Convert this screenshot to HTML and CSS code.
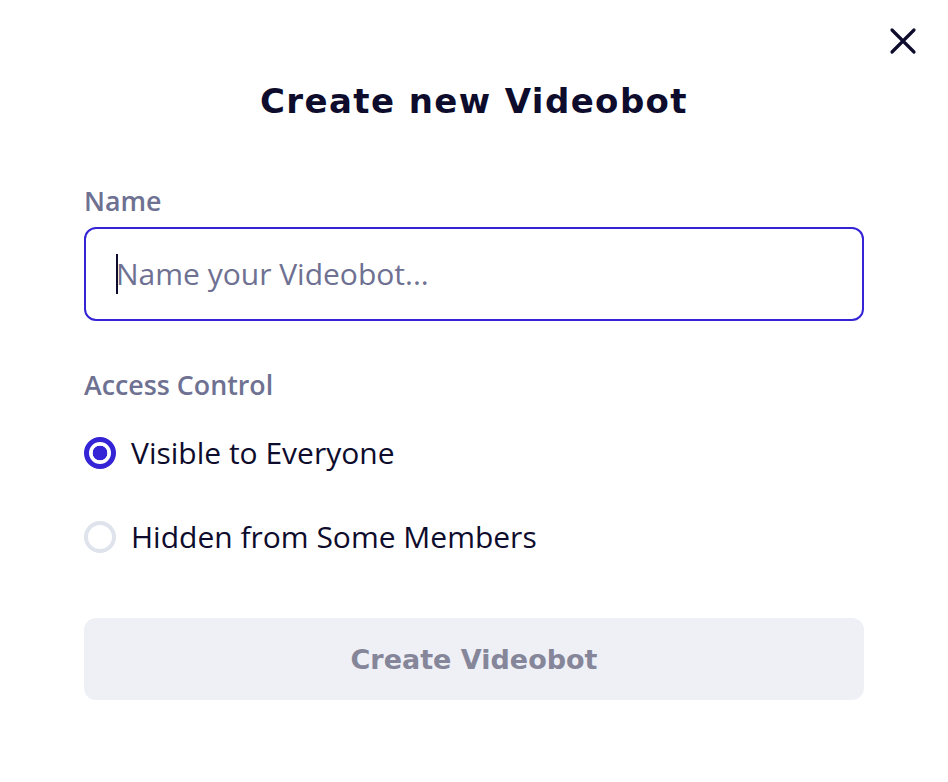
FILE: index.html
```html
<!DOCTYPE html>
<html>
<head>
<meta charset="utf-8">
<link rel="stylesheet" href="styles.css">
</head>
<body>
<div class="modal">
  <button class="close" aria-label="Close">
    <svg width="28" height="28" viewBox="0 0 28 28"><path d="M3 3 L25 25 M25 3 L3 25" stroke="#0e0c2c" stroke-width="3.2" stroke-linecap="round" fill="none"/></svg>
  </button>
  <h1 class="title">Create new Videobot</h1>
  <div class="field">
    <label class="label">Name</label>
    <div class="input"><span class="caret"></span><span class="placeholder">Name your Videobot...</span></div>
  </div>
  <div class="field access">
    <label class="label">Access Control</label>
    <div class="options">
      <div class="option"><span class="radio checked"></span><span class="opt-text">Visible to Everyone</span></div>
      <div class="option"><span class="radio"></span><span class="opt-text">Hidden from Some Members</span></div>
    </div>
  </div>
  <div class="button">Create Videobot</div>
</div>
</body>
</html>
```
FILE: styles.css
```css
html, body {
  margin: 0;
  padding: 0;
  background: #ffffff;
}
.modal {
  position: relative;
  width: 948px;
  height: 782px;
  box-sizing: border-box;
  padding: 78px 84px 0 84px;
  font-family: "Open Sans", "Noto Sans", sans-serif;
}
.close {
  position: absolute;
  top: 27px;
  left: 889px;
  width: 28px;
  height: 28px;
  padding: 0;
  border: none;
  background: none;
}
.close svg { display: block; }
.title {
  margin: 0;
  text-align: center;
  font-family: "DejaVu Sans", sans-serif;
  font-weight: 700;
  font-size: 34px;
  letter-spacing: 1.4px;
  line-height: 46px;
  color: #0e0c2c;
}
.field {
  display: flex;
  flex-direction: column;
  margin-top: 62px;
}
.label {
  font-size: 26.8px;
  font-weight: 600;
  line-height: 30px;
  color: #6e7191;
  margin-bottom: 11px;
}
.input {
  height: 94px;
  box-sizing: border-box;
  border: 2px solid #3424d6;
  border-radius: 12px;
  display: flex;
  align-items: center;
  padding-left: 30px;
}
.caret {
  width: 2px;
  height: 40px;
  background: #0e0c2c;
  margin-right: -2px;
}
.placeholder {
  font-size: 30px;
  line-height: 40px;
  color: #6e7191;
}
.access {
  margin-top: 49px;
}
.access .label {
  margin-bottom: 32px;
}
.options {
  display: flex;
  flex-direction: column;
  gap: 42px;
}
.option {
  display: flex;
  align-items: center;
  gap: 15px;
  height: 42px;
}
.radio {
  width: 32px;
  height: 32px;
  box-sizing: border-box;
  border-radius: 50%;
  border: 4px solid #dfe3eb;
  background: #fff;
  flex: none;
}
.radio.checked {
  border: 5px solid #3424d6;
  background: radial-gradient(circle, #3424d6 0 7px, #fff 7.6px);
}
.opt-text {
  font-size: 30px;
  line-height: 42px;
  color: #0e0c2c;
}
.button {
  margin-top: 60px;
  height: 82px;
  border-radius: 12px;
  background: #eff0f6;
  display: flex;
  align-items: center;
  justify-content: center;
  font-family: "DejaVu Sans", sans-serif;
  font-weight: 700;
  font-size: 27px;
  color: #858699;
}
```
